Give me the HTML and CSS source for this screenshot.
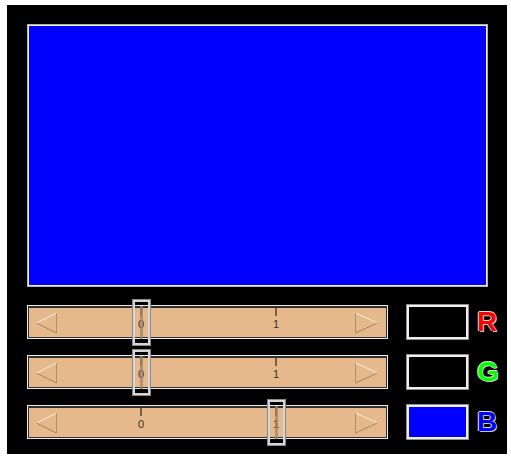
FILE: index.html
```html
<!DOCTYPE html>
<html lang="en">
<head>
    <meta charset="UTF-8">
    <title>RGB Mixer</title>
    <link rel="stylesheet" href="styles.css">
</head>
<body>

    <div class="mixer">
        <div class="preview"></div>

        <div class="channel">
            <div class="slider">
                <svg class="arrow arrow-left" width="22" height="22" viewBox="0 0 22 22">
                    <line x1="20.5" y1="1" x2="0.5" y2="11" stroke="#fbefe2" stroke-width="1"/>
                    <line x1="0.5" y1="11" x2="20.5" y2="21" stroke="#a8825c" stroke-width="1"/>
                    <line x1="20.5" y1="1" x2="20.5" y2="21" stroke="#b48e68" stroke-width="1"/>
                </svg>
                <div class="tick" style="left: 112px"></div>
                <div class="tick-label" style="left: 113px">0</div>
                <div class="tick" style="left: 247px"></div>
                <div class="tick-label" style="left: 248px">1</div>
                <div class="thumb" style="left: 105px"></div>
                <svg class="arrow arrow-right" width="23" height="22" viewBox="0 0 23 22">
                    <line x1="0.5" y1="1" x2="22.5" y2="11" stroke="#fbefe2" stroke-width="1"/>
                    <line x1="22.5" y1="11" x2="0.5" y2="21" stroke="#a8825c" stroke-width="1"/>
                    <line x1="0.5" y1="1" x2="0.5" y2="21" stroke="#b48e68" stroke-width="1"/>
                </svg>
            </div>
            <div class="swatch"></div>
            <div class="channel-name red">R</div>
        </div>

        <div class="channel">
            <div class="slider">
                <svg class="arrow arrow-left" width="22" height="22" viewBox="0 0 22 22">
                    <line x1="20.5" y1="1" x2="0.5" y2="11" stroke="#fbefe2" stroke-width="1"/>
                    <line x1="0.5" y1="11" x2="20.5" y2="21" stroke="#a8825c" stroke-width="1"/>
                    <line x1="20.5" y1="1" x2="20.5" y2="21" stroke="#b48e68" stroke-width="1"/>
                </svg>
                <div class="tick" style="left: 112px"></div>
                <div class="tick-label" style="left: 113px">0</div>
                <div class="tick" style="left: 247px"></div>
                <div class="tick-label" style="left: 248px">1</div>
                <div class="thumb" style="left: 105px"></div>
                <svg class="arrow arrow-right" width="23" height="22" viewBox="0 0 23 22">
                    <line x1="0.5" y1="1" x2="22.5" y2="11" stroke="#fbefe2" stroke-width="1"/>
                    <line x1="22.5" y1="11" x2="0.5" y2="21" stroke="#a8825c" stroke-width="1"/>
                    <line x1="0.5" y1="1" x2="0.5" y2="21" stroke="#b48e68" stroke-width="1"/>
                </svg>
            </div>
            <div class="swatch"></div>
            <div class="channel-name green">G</div>
        </div>

        <div class="channel">
            <div class="slider">
                <svg class="arrow arrow-left" width="22" height="22" viewBox="0 0 22 22">
                    <line x1="20.5" y1="1" x2="0.5" y2="11" stroke="#fbefe2" stroke-width="1"/>
                    <line x1="0.5" y1="11" x2="20.5" y2="21" stroke="#a8825c" stroke-width="1"/>
                    <line x1="20.5" y1="1" x2="20.5" y2="21" stroke="#b48e68" stroke-width="1"/>
                </svg>
                <div class="tick" style="left: 112px"></div>
                <div class="tick-label" style="left: 113px">0</div>
                <div class="tick" style="left: 247px"></div>
                <div class="tick-label" style="left: 248px">1</div>
                <div class="thumb" style="left: 240px"></div>
                <svg class="arrow arrow-right" width="23" height="22" viewBox="0 0 23 22">
                    <line x1="0.5" y1="1" x2="22.5" y2="11" stroke="#fbefe2" stroke-width="1"/>
                    <line x1="22.5" y1="11" x2="0.5" y2="21" stroke="#a8825c" stroke-width="1"/>
                    <line x1="0.5" y1="1" x2="0.5" y2="21" stroke="#b48e68" stroke-width="1"/>
                </svg>
            </div>
            <div class="swatch blue"></div>
            <div class="channel-name blue-text">B</div>
        </div>
    </div>

</body>
</html>
```

FILE: styles.css
```css
*, *::before, *::after {
    box-sizing: border-box;
}

body {
    margin: 0;
    padding: 0;
    background-color: white;
    font-family: 'Liberation Sans', Arial, sans-serif;
}

.mixer {
    width: 500px;
    height: 449px;
    margin: 5px 0 0 7px;
    padding: 19px 20px 0 20px;
    background-color: black;
}

.preview {
    width: 461px;
    height: 263px;
    margin-bottom: 18px;
    background-color: #0000ff;
    border: 1px solid #b4b4b4;
    box-shadow: inset 0 0 0 1px #f2f2f2;
}

.channel {
    display: flex;
    align-items: center;
    height: 34px;
    margin-bottom: 16px;
}

/* the scrollbar-like slider */
.slider {
    position: relative;
    flex-shrink: 0;
    width: 361px;
    height: 34px;
    margin-right: 19px;
    background-color: #e6b98c;
    border: 1px solid #ececec;
    box-shadow: inset 1px 2px 0 #303030, inset -1px -1px 0 #303030;
}

.arrow {
    position: absolute;
    top: 6px;
}

.arrow-left {
    left: 8px;
}

.arrow-right {
    right: 9px;
}

.tick {
    position: absolute;
    top: 2px;
    width: 2px;
    height: 8px;
    background-color: #7a5e46;
}

.tick-label {
    position: absolute;
    top: 12px;
    width: 12px;
    margin-left: -6px;
    font-size: 11px;
    line-height: 12px;
    text-align: center;
    color: #303030;
}

.thumb {
    position: absolute;
    top: -6px;
    width: 17px;
    height: 45px;
    border: 2px solid #d6d6d6;
    box-shadow: 0 0 0 1px #8a8a8a;
}

.thumb::after {
    content: "";
    position: absolute;
    top: 4px;
    left: 5px;
    width: 3px;
    height: 33px;
    background-color: #a08468;
    opacity: 0.75;
}

.swatch {
    flex-shrink: 0;
    width: 61px;
    height: 34px;
    margin-right: 9px;
    background-color: black;
    border: 2px solid #f0f0f0;
    box-shadow: 0 0 0 1px #909090;
}

.swatch.blue {
    background-color: #0000ff;
}

.channel-name {
    flex-shrink: 0;
    font-size: 28px;
    font-weight: bold;
    line-height: 34px;
    text-shadow: 1px 1px 0 #c8c8c8, -1px 0 0 #e0e0e0, 0 -1px 0 #e0e0e0;
}

.red {
    color: #ff0000;
}

.green {
    color: #00ff00;
}

.blue-text {
    color: #0000ff;
}
```
